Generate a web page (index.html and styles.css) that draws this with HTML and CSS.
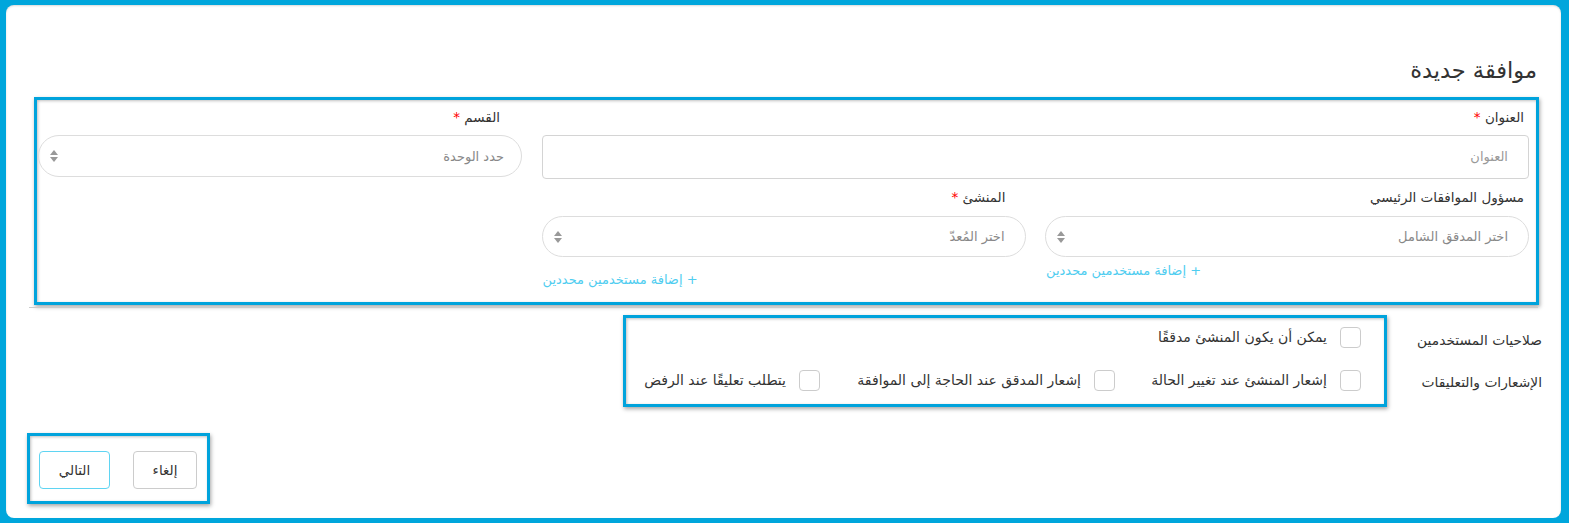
FILE: index.html
```html
<!DOCTYPE html>
<html lang="ar" dir="rtl">
<head>
<meta charset="utf-8">
<link rel="stylesheet" href="styles.css">
</head>
<body>
<div class="card">
  <h2 class="title">موافقة جديدة</h2>

  <div class="mark form-box">
    <div class="grid">
      <div class="field span2">
        <label class="lbl">العنوان <span class="req">*</span></label>
        <div class="input">العنوان</div>
      </div>
      <div class="field">
        <label class="lbl">القسم <span class="req">*</span></label>
        <div class="select short"><span>حدد الوحدة</span><i class="arrows"></i></div>
      </div>
      <div class="field">
        <label class="lbl">مسؤول الموافقات الرئيسي</label>
        <div class="select"><span>اختر المدقق الشامل</span><i class="arrows"></i></div>
        <a class="add add-a">+ إضافة مستخدمين محددين</a>
      </div>
      <div class="field">
        <label class="lbl">المنشئ <span class="req">*</span></label>
        <div class="select"><span>اختر المُعدّ</span><i class="arrows"></i></div>
        <a class="add add-b">+ إضافة مستخدمين محددين</a>
      </div>
    </div>
  </div>

  <hr class="sep">

  <div class="perms">
    <div class="perm-labels">
      <div class="plabel">صلاحيات المستخدمين</div>
      <div class="plabel">الإشعارات والتعليقات</div>
    </div>
    <div class="mark checks-box">
      <div class="check-row">
        <label class="check"><span class="box"></span><span>يمكن أن يكون المنشئ مدققًا</span></label>
      </div>
      <div class="check-row">
        <label class="check w1"><span class="box"></span><span>إشعار المنشئ عند تغيير الحالة</span></label>
        <label class="check w2"><span class="box"></span><span>إشعار المدقق عند الحاجة إلى الموافقة</span></label>
        <label class="check"><span class="box"></span><span>يتطلب تعليقًا عند الرفض</span></label>
      </div>
    </div>
  </div>

  <div class="footer">
    <div class="mark btn-box">
      <button class="btn">إلغاء</button>
      <button class="btn primary">التالي</button>
    </div>
  </div>
</div>
</body>
</html>
```
FILE: styles.css
```css
* { box-sizing: border-box; }
html, body { height: 100%; }
body {
  margin: 0;
  background: #00a6dc;
  font-family: "DejaVu Sans", "Noto Sans", sans-serif;
  color: #333;
  font-size: 13px;
  padding: 5px 8px 5px 6px;
}
.card {
  background: #fff;
  border-radius: 8px;
  height: 513px;
  padding: 50px 23px 0 23px;
  box-shadow: inset 0 1px 2px rgba(0,0,0,0.15);
}
.title {
  margin: 0 1px 0 0;
  font-size: 22.5px;
  font-weight: normal;
  line-height: 30px;
  color: #333;
}
.mark {
  border: 3px solid #00a3dc;
  box-shadow: 1px 2px 4px rgba(0,0,0,0.35), inset 1px 1px 3px rgba(0,0,0,0.25);
}
.form-box {
  margin: 12px -1px 0 5px;
  height: 208px;
  padding: 7px 7px 0 1px;
}
.grid {
  display: grid;
  grid-template-columns: repeat(3, 1fr);
  column-gap: 19.5px;
}
.span2 { grid-column: span 2; }
.field { display: flex; flex-direction: column; align-items: stretch; }
.lbl {
  display: block;
  line-height: 20px;
  font-size: 13.5px;
  margin-bottom: 8px;
  color: #333;
}
.span2 .lbl { margin-right: 5px; }
.field:nth-child(2) .lbl { margin-right: 22px; }
.field:nth-child(3) .lbl, .field:nth-child(4) .lbl { margin-top: 8px; margin-bottom: 9px; }
.field:nth-child(3) .lbl { margin-right: 5px; }
.field:nth-child(4) .lbl { margin-right: 20px; }
.req { color: #f00; }
.input {
  height: 44px;
  border: 1px solid #d4d4d4;
  border-radius: 4px;
  padding: 0 20px;
  line-height: 42px;
  color: #999;
  font-size: 13px;
}
.select {
  height: 41px;
  border: 1px solid #ddd;
  border-radius: 21px;
  display: flex;
  align-items: center;
  justify-content: space-between;
  padding: 0 20px 0 10px;
  color: #888;
  font-size: 13px;
}
.select.short { height: 42px; padding-right: 17px; }
.arrows {
  display: inline-flex;
  flex-direction: column;
  gap: 2px;
  width: 9px;
}
.arrows::before, .arrows::after {
  content: "";
  display: block;
  width: 0; height: 0;
  border-left: 4.5px solid transparent;
  border-right: 4.5px solid transparent;
}
.arrows::before { border-bottom: 5px solid #999; }
.arrows::after { border-top: 5px solid #999; }
.add {
  color: #4fcdf0;
  font-size: 13px;
  line-height: 18px;
  align-self: flex-end;
}
.add-a { margin-top: 5px; margin-left: 1px; }
.add-b { margin-top: 14px; margin-left: 1px; }
.sep {
  border: 0;
  border-top: 1px solid #ccc;
  margin: 2px 0 0 0;
  height: 0;
}
.perms {
  display: flex;
  align-items: flex-start;
  margin-top: 7px;
}
.perm-labels {
  width: 155px;
  margin-right: -4px;
  padding-top: 15px;
  flex: none;
}
.plabel { line-height: 21px; font-size: 13.8px; color: #333; }
.plabel + .plabel { margin-top: 21px; }
.checks-box {
  width: 764px;
  height: 92px;
  padding: 9px 23px 0 0;
  display: flex;
  flex-direction: column;
  gap: 22px;
}
.check-row { display: flex; align-items: center; }
.check {
  display: inline-flex;
  align-items: center;
  gap: 13px;
  font-size: 14px;
  color: #333;
  line-height: 21px;
  flex: none;
}
.check.w1 { width: 246px; }
.check.w2 { width: 295px; }
.box {
  width: 21px; height: 21px;
  border: 1px solid #ccc;
  border-radius: 4px;
  flex: none;
}
.footer {
  display: flex;
  justify-content: flex-end;
  margin-top: 26px;
}
.btn-box {
  margin-left: -2px;
  width: 183px;
  height: 71px;
  display: flex;
  gap: 23px;
  padding: 15px 10px 0 9px;
}
.btn {
  font-family: inherit;
  height: 38px;
  background: #fff;
  border: 1px solid #ccc;
  border-radius: 4px;
  color: #333;
  font-size: 13.5px;
  padding: 0;
  width: 64px;
}
.btn.primary { border-color: #5fd4f2; width: 71px; }
```
